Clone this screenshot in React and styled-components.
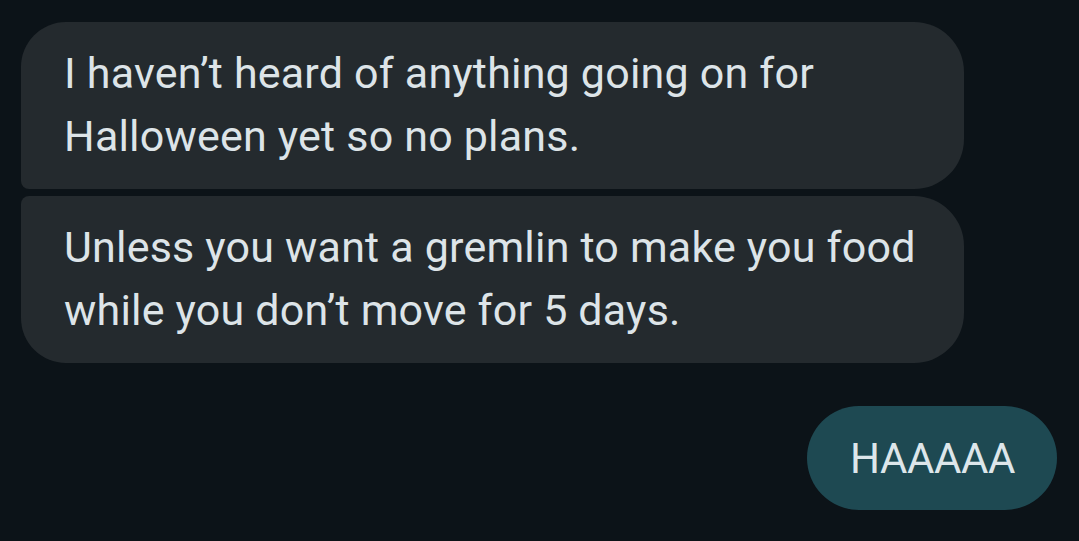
import styled, { createGlobalStyle } from "styled-components"

const GlobalStyle = createGlobalStyle`
  html, body {
    margin: 0;
    padding: 0;
    background-color: #0c1318;
  }
  body {
    font-family: Roboto, "Noto Sans", sans-serif;
  }
`

const Thread = styled.div`
  width: 1079px;
  height: 541px;
  box-sizing: border-box;
  padding: 22px 22px 0 21px;
  display: flex;
  flex-direction: column;
  overflow: hidden;
`

const Group = styled.div`
  display: flex;
  flex-direction: column;
  align-items: flex-start;
  gap: 7px;
`

const Bubble = styled.div`
  width: 943px;
  box-sizing: border-box;
  padding: 20px 30px 21px 43px;
  background-color: #242a2e;
  color: #dde4e8;
  font-size: 43px;
  line-height: 63px;
  letter-spacing: 0.2px;
  white-space: nowrap;
  border-radius: ${(p) => (p.first ? "45px 50px 50px 8px" : "8px 50px 50px 45px")};
`

const Outgoing = styled.div`
  align-self: flex-end;
  margin-top: 43px;
  height: 104px;
  box-sizing: border-box;
  padding: 0 42px 0 43px;
  display: flex;
  align-items: center;
  background-color: #1e4952;
  color: #dde6ea;
  font-size: 42px;
  letter-spacing: -0.4px;
  border-radius: 52px;
`

const App = () => {
  return (
    <>
      <GlobalStyle />
      <Thread>
        <Group>
          <Bubble first>
            I haven’t heard of anything going on for<br />
            Halloween yet so no plans.
          </Bubble>
          <Bubble>
            Unless you want a gremlin to make you food<br />
            while you don’t move for 5 days.
          </Bubble>
        </Group>
        <Outgoing>HAAAAA</Outgoing>
      </Thread>
    </>
  )
}

export default App
